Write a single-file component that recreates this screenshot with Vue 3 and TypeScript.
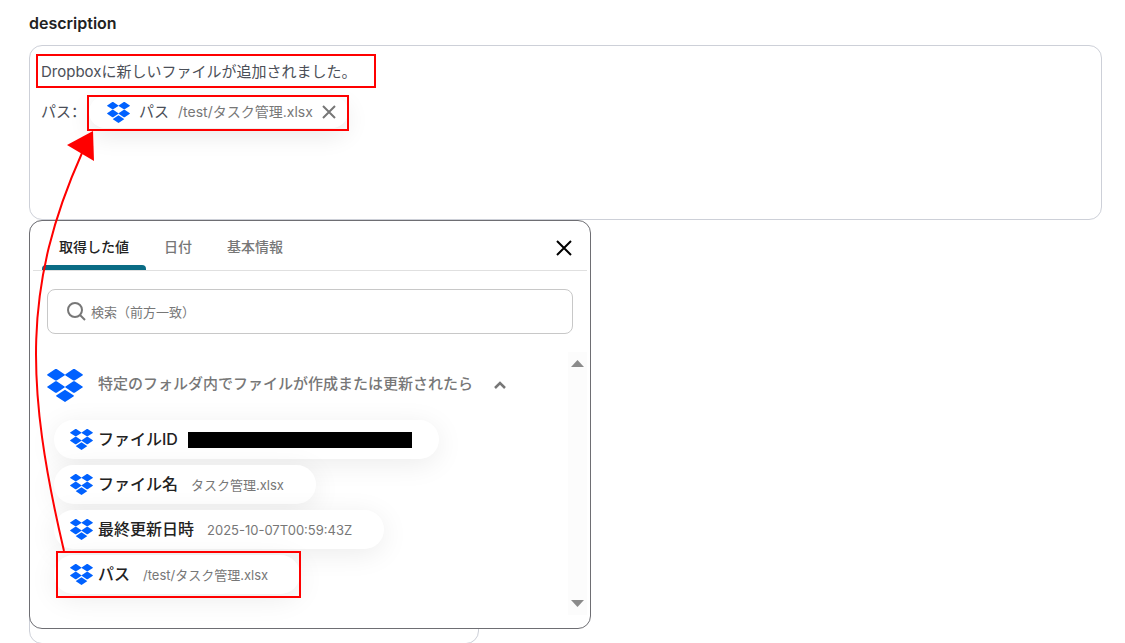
<script setup lang="ts">
import { ref, h } from 'vue'

interface Item {
  label: string
  value: string
  masked?: boolean
}

const tabs: string[] = ['取得した値', '日付', '基本情報']
const activeTab = ref(0)
const query = ref('')
const items: Item[] = [
  { label: 'ファイルID', value: '', masked: true },
  { label: 'ファイル名', value: 'タスク管理.xlsx' },
  { label: '最終更新日時', value: '2025-10-07T00:59:43Z' },
  { label: 'パス', value: '/test/タスク管理.xlsx' },
]

// Diamonds have slightly flattened tops and bottoms so that they hold up at small sizes.
const diamond = (x: number, y: number) =>
  `M${x - 2} ${y - 17}h4l24 16v2l-24 16h-4l-24 -16v-2z`
const logoPath = [
  diamond(26.5, 17),
  diamond(79.5, 17),
  diamond(26.5, 53),
  diamond(79.5, 53),
  'M53 61l26 17v2l-26 17l-26 -17v-2z',
].join('')
const DropboxLogo = () =>
  h('svg', { viewBox: '0 0 106 97', 'aria-hidden': 'true' }, [h('path', { d: logoPath, fill: '#0061ff' })])
</script>

<template>
  <main class="page">
    <h2 id="field-label" class="field-label">description</h2>
    <div class="editor" contenteditable="true" role="textbox" aria-multiline="true" aria-labelledby="field-label" spellcheck="false">
      <p class="line"><span class="text">Dropboxに新しいファイルが追加されました。</span></p>
      <div class="line">
        <span class="text">パス<span class="colon">：</span></span>
        <span class="token" contenteditable="false">
          <DropboxLogo class="logo-small" />
          <span class="text token-label">パス</span>
          <span class="text token-value">/test/タスク管理.xlsx</span>
          <button class="token-remove" type="button" aria-label="削除">
            <svg viewBox="0 0 14 14" aria-hidden="true"><path d="M1 1l12 12M13 1L1 13" /></svg>
          </button>
        </span>
      </div>
    </div>

    <div class="below">
      <section class="panel">
        <header class="panel-head">
          <nav class="tabs" role="tablist">
            <button
              v-for="(tab, i) in tabs"
              :key="tab"
              class="tab"
              :class="{ active: i === activeTab }"
              type="button"
              role="tab"
              :aria-selected="i === activeTab"
              @click="activeTab = i"
            >
              {{ tab }}
            </button>
          </nav>
          <button class="close" type="button" aria-label="閉じる">
            <svg viewBox="0 0 18 18" aria-hidden="true"><path d="M2 2l14 14M16 2L2 16" /></svg>
          </button>
        </header>

        <label class="search">
          <svg viewBox="0 0 20 20" aria-hidden="true">
            <circle cx="9" cy="8" r="7" />
            <path d="M14 13l5 5" />
          </svg>
          <input v-model="query" type="text" placeholder="検索（前方一致）" aria-label="検索（前方一致）" />
        </label>

        <div class="results">
          <div class="content">
            <button class="group" type="button" aria-expanded="true">
              <DropboxLogo class="logo-large" />
              <span class="group-label">特定のフォルダ内でファイルが作成または更新されたら</span>
              <svg class="chevron" viewBox="0 0 14 10" aria-hidden="true"><path d="M2 8l5-5l5 5" /></svg>
            </button>
            <ul class="items">
              <li v-for="item in items" :key="item.label">
                <button class="item" type="button">
                  <DropboxLogo class="logo-small" />
                  <span class="text item-label">{{ item.label }}</span>
                  <span v-if="item.masked" class="mask"></span>
                  <span v-else class="item-value">{{ item.value }}</span>
                </button>
              </li>
            </ul>
          </div>
          <div class="scrollbar">
            <button type="button" aria-label="上へ"><svg viewBox="0 0 13 7"><path d="M0 7L6.500 0L13 7z" /></svg></button>
            <button type="button" aria-label="下へ"><svg viewBox="0 0 13 7"><path d="M0 0L6.500 7L13 0z" /></svg></button>
          </div>
        </div>
      </section>
      <div class="next-field"></div>
    </div>

    <svg class="notes" width="400" height="620" viewBox="0 0 400 620" aria-hidden="true">
      <rect x="37" y="55" width="338" height="32" />
      <rect x="88" y="96" width="260" height="34" />
      <rect x="57" y="552" width="243" height="45" />
      <path d="M64 551C25 385 23 285 82 153" />
      <path class="head" d="M93 131L67 145L94 161z" />
    </svg>
  </main>
</template>

<style>
body {
  margin: 0;
  background: #fff;
  overflow: hidden;
}
</style>

<style scoped>
.page {
  position: relative;
  box-sizing: border-box;
  padding: 11px 23px 0 29px;
  font-family: Inter, 'Noto Sans CJK JP', sans-serif;
  color: #222;
}
button {
  margin: 0;
  padding: 0;
  border: 0;
  background: none;
  font: inherit;
  color: inherit;
  cursor: pointer;
}
svg {
  display: block;
  flex: none;
}
.field-label {
  margin: 0 0 10px;
  font-size: 16px;
  line-height: 24px;
  font-weight: 600;
}
.editor {
  box-sizing: border-box;
  min-height: 175px;
  padding: 6px 11px;
  border: 1px solid #cdd0d8;
  border-radius: 13px;
  font-size: 15px;
  color: #4b4f58;
  outline: none;
}
.line {
  display: flex;
  align-items: center;
  margin: 0;
  height: 40px;
}
.text {
  padding-bottom: 3px;
}
.colon {
  font-family: 'Noto Sans CJK SC', sans-serif;
}
.token {
  display: flex;
  align-items: center;
  height: 32px;
  margin-left: 3px;
  padding: 0 12px 0 18px;
  border-radius: 16px;
  background: #fff;
  box-shadow: 0 8px 24px rgba(0, 0, 0, 0.09);
}
.logo-small {
  width: 23px;
  height: 21px;
}
.token-label {
  margin-left: 9px;
}
.token-value {
  margin-left: 9px;
  font-size: 14px;
  color: #777;
}
.token-remove {
  margin-left: 9px;
}
.token-remove svg {
  width: 14px;
  height: 14px;
}
.token-remove path {
  fill: none;
  stroke: #777;
  stroke-width: 2;
}
.below {
  display: grid;
}
.panel,
.next-field {
  grid-area: 1 / 1;
  box-sizing: border-box;
}
.panel {
  z-index: 1;
  width: 562px;
  max-width: 100%;
  align-self: start;
  padding: 0 3px 13px;
  border: 1px solid #6e6e73;
  border-radius: 13px;
  background: #fff;
}
.next-field {
  width: 450px;
  height: 424px;
  border: 1px solid #cdd0d8;
  border-radius: 13px;
}
.panel-head {
  display: flex;
  justify-content: space-between;
  align-items: stretch;
  height: 49px;
  border-bottom: 1px solid #e0e0e0;
}
.tabs {
  display: flex;
  gap: 1px;
  margin-left: 9px;
}
.tab {
  position: relative;
  padding: 0 17px;
  font-size: 14px;
  font-weight: 500;
  color: #777;
}
.tab.active {
  color: #222;
}
.tab.active::after {
  content: '';
  position: absolute;
  inset: auto 0 0;
  height: 5px;
  border-radius: 4px 4px 0 0;
  background: #0a6c85;
}
.close {
  margin: 5px 14px 0 0;
}
.close svg {
  width: 18px;
  height: 18px;
}
.close path {
  fill: none;
  stroke: #000;
  stroke-width: 2;
}
.search {
  display: flex;
  align-items: center;
  gap: 5px;
  box-sizing: border-box;
  height: 45px;
  margin: 18px 14px 18px;
  padding: 0 18px;
  border: 1px solid #c8c8c8;
  border-radius: 8px;
}
.search svg {
  width: 20px;
  height: 20px;
  fill: none;
  stroke: #777;
  stroke-width: 2;
}
.search input {
  flex: 1;
  min-width: 0;
  padding: 0;
  border: 0;
  outline: none;
  background: none;
  font: inherit;
  font-size: 13px;
}
.search input::placeholder {
  color: #777;
  opacity: 1;
}
.results {
  display: flex;
}
.content {
  flex: 1;
  min-width: 0;
  padding: 15px 0 0 14px;
}
.group {
  display: flex;
  align-items: center;
  height: 36px;
  font-size: 15px;
  font-weight: 500;
  color: #777;
}
.group-label {
  padding-bottom: 5px;
}
.logo-large {
  width: 36px;
  height: 33px;
  margin-right: 15px;
}
.chevron {
  width: 14px;
  height: 10px;
  margin-left: 20px;
}
.chevron path {
  fill: none;
  stroke: #777;
  stroke-width: 2.5;
}
.items {
  display: flex;
  flex-direction: column;
  align-items: flex-start;
  gap: 6px;
  margin: 17px 0 0 7px;
  padding: 0;
  list-style: none;
}
.item {
  display: flex;
  align-items: center;
  height: 39px;
  padding: 0 27px 0 16px;
  border-radius: 20px;
  background: #fff;
  box-shadow: 0 5px 28px rgba(0, 0, 0, 0.08);
}
.item-label {
  margin-left: 5px;
  font-size: 16px;
  font-weight: 500;
  color: #222;
}
.item-value {
  margin-left: 13px;
  padding-right: 5px;
  font-size: 13px;
  color: #777;
}
.mask {
  width: 224px;
  height: 16px;
  margin-left: 10px;
  background: #000;
}
.scrollbar {
  display: flex;
  flex-direction: column;
  justify-content: space-between;
  align-items: center;
  width: 19px;
  height: 247px;
  padding: 8px 0;
  background: #fcfcfc;
}
.scrollbar svg {
  width: 13px;
  height: 7px;
  fill: #8b8b8b;
}
.notes {
  position: absolute;
  z-index: 2;
  top: 0;
  left: 0;
  pointer-events: none;
  fill: none;
  stroke: #f00;
  stroke-width: 2;
}
.notes .head {
  fill: #f00;
  stroke: none;
}
</style>
